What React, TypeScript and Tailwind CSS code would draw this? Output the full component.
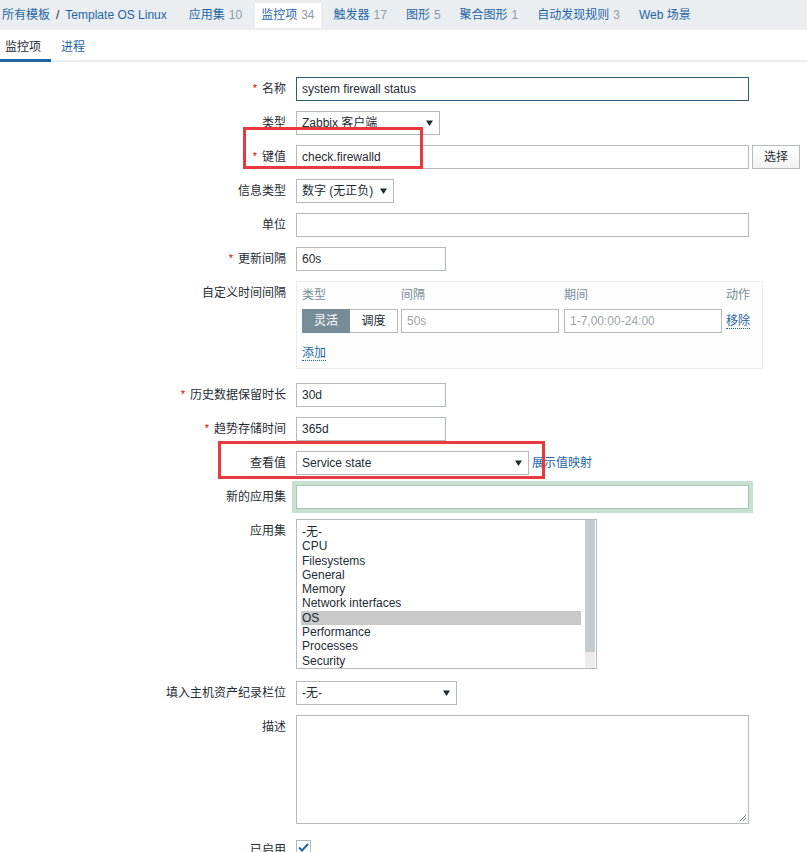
import { ReactNode } from "react";

function Caret() {
    return (
        <svg width="7" height="6" viewBox="0 0 7 6" className="shrink-0">
            <path d="M0 0.5h7L3.5 6z" fill="#1f2c33" />
        </svg>
    );
}

function Row({
    label,
    required,
    children,
    className = "",
}: {
    label: string;
    required?: boolean;
    children: ReactNode;
    className?: string;
}) {
    return (
        <div className={"flex " + className}>
            <div className="w-[286px] shrink-0 text-right h-[24px] leading-[24px] whitespace-nowrap">
                {required && (
                    <span className="text-[#dc0000] text-[11px] mr-[5px] relative top-[-1px]">
                        *
                    </span>
                )}
                {label}
            </div>
            <div className="ml-[10px] flex items-start">{children}</div>
        </div>
    );
}

function TextBox({
    value,
    width,
    focused,
    placeholder,
}: {
    value?: string;
    width: string;
    focused?: boolean;
    placeholder?: boolean;
}) {
    return (
        <div
            className={
                "h-[24px] leading-[22px] px-[5px] border bg-white whitespace-nowrap overflow-hidden " +
                width +
                (focused ? " border-[#2f5b73]" : " border-[#b5b9bb]") +
                (placeholder ? " text-[#9ba5aa]" : "")
            }
        >
            {value}
        </div>
    );
}

function SelectBox({ value, width }: { value: string; width: string }) {
    return (
        <div
            className={
                "h-[24px] flex items-center justify-between pl-[5px] pr-[6px] border border-[#b5b9bb] bg-white whitespace-nowrap " +
                width
            }
        >
            <span>{value}</span>
            <Caret />
        </div>
    );
}

const navItems = [
    { name: "应用集", count: "10" },
    { name: "监控项", count: "34", active: true },
    { name: "触发器", count: "17" },
    { name: "图形", count: "5" },
    { name: "聚合图形", count: "1" },
    { name: "自动发现规则", count: "3" },
    { name: "Web 场景", count: "" },
];

const applications = [
    "-无-",
    "CPU",
    "Filesystems",
    "General",
    "Memory",
    "Network interfaces",
    "OS",
    "Performance",
    "Processes",
    "Security",
];

export default function App() {
    return (
        <div className="relative w-[807px] h-[852px] overflow-hidden bg-white text-[12px] text-[#1f2c33] font-['Liberation_Sans','Noto_Sans_CJK_SC',sans-serif]">
            {/* breadcrumbs */}
            <div className="h-[30px] bg-[#ebeef0] flex items-center pl-[2px] text-[#1f65a6]">
                <span>所有模板</span>
                <span className="mx-[6px] text-[#1f2c33]">/</span>
                <span className="pr-[9px]">Template OS Linux</span>
                {navItems.map((item) => (
                    <span
                        key={item.name}
                        className={
                            "ml-[7px] px-[6px] h-[25px] leading-[25px] " +
                            (item.active ? "bg-white" : "")
                        }
                    >
                        {item.name}
                        {item.count && (
                            <span className="ml-[4px] text-[#8e9aa2]">
                                {item.count}
                            </span>
                        )}
                    </span>
                ))}
            </div>

            {/* tabs */}
            <div className="h-[32px] flex border-b-2 border-[#ebeef0]">
                <div className="pl-[5px] pr-[10px] pt-[8px] border-b-[3px] border-[#1f65a6] mb-[-2px]">
                    监控项
                </div>
                <div className="pl-[10px] pt-[8px] text-[#1f65a6]">进程</div>
            </div>

            <div className="pt-[15px]">
                <Row label="名称" required className="mb-[10px]">
                    <TextBox value="system firewall status" width="w-[453px]" focused />
                </Row>
                <Row label="类型" className="mb-[10px]">
                    <SelectBox value="Zabbix 客户端" width="w-[144px]" />
                </Row>
                <Row label="键值" required className="mb-[10px]">
                    <TextBox value="check.firewalld" width="w-[453px]" />
                    <div className="ml-[3px] w-[48px] h-[24px] leading-[22px] text-center border border-[#b5b9bb] bg-gradient-to-b from-white to-[#f2f2f2]">
                        选择
                    </div>
                </Row>
                <Row label="信息类型" className="mb-[10px]">
                    <SelectBox value="数字 (无正负)" width="w-[98px]" />
                </Row>
                <Row label="单位" className="mb-[10px]">
                    <TextBox width="w-[453px]" />
                </Row>
                <Row label="更新间隔" required className="mb-[10px]">
                    <TextBox value="60s" width="w-[150px]" />
                </Row>
                <Row label="自定义时间间隔" className="mb-[14px]">
                    <div className="w-[467px] h-[88px] border border-[#ebebeb] bg-[#fdfdfd] pl-[5px] pt-[6px]">
                        <div className="flex h-[15px] leading-[15px] text-[#768d99]">
                            <span className="w-[99px]">类型</span>
                            <span className="w-[163px]">间隔</span>
                            <span className="w-[162px]">期间</span>
                            <span>动作</span>
                        </div>
                        <div className="flex mt-[6px] items-center">
                            <div className="w-[99px] flex">
                                <div className="w-[48px] h-[24px] leading-[22px] text-center border border-[#768d99] bg-[#768d99] text-white">
                                    灵活
                                </div>
                                <div className="w-[48px] h-[24px] leading-[22px] text-center border border-[#b5b9bb] border-l-0 bg-white">
                                    调度
                                </div>
                            </div>
                            <div className="w-[163px]">
                                <TextBox value="50s" width="w-[158px]" placeholder />
                            </div>
                            <div className="w-[162px]">
                                <TextBox value="1-7,00:00-24:00" width="w-[158px]" placeholder />
                            </div>
                            <span className="text-[#1f65a6] border-b border-dotted border-[#1f65a6] leading-[14px]">
                                移除
                            </span>
                        </div>
                        <div className="mt-[11px]">
                            <span className="text-[#1f65a6] border-b border-dotted border-[#1f65a6] leading-[14px]">
                                添加
                            </span>
                        </div>
                    </div>
                </Row>
                <Row label="历史数据保留时长" required className="mb-[10px]">
                    <TextBox value="30d" width="w-[150px]" />
                </Row>
                <Row label="趋势存储时间" required className="mb-[10px]">
                    <TextBox value="365d" width="w-[150px]" />
                </Row>
                <Row label="查看值" className="mb-[10px]">
                    <SelectBox value="Service state" width="w-[233px]" />
                    <span className="ml-[3px] leading-[24px] text-[#1f65a6]">
                        展示值映射
                    </span>
                </Row>
                <Row label="新的应用集" className="mb-[10px]">
                    <div className="w-[453px] h-[24px] border border-[#a9c4b0] bg-white shadow-[0_0_0_4px_#c8e0cf]" />
                </Row>
                <Row label="应用集" className="mb-[12px]">
                    <div className="w-[301px] h-[150px] border border-[#b5b9bb] bg-white flex">
                        <div className="flex-1 pt-[5px] pl-[4px] pr-[1px]">
                            {applications.map((app) => (
                                <div
                                    key={app}
                                    className={
                                        "h-[14.3px] leading-[14.3px] pl-[1px] " +
                                        (app === "OS" ? "bg-[#c8c8c8]" : "")
                                    }
                                >
                                    {app}
                                </div>
                            ))}
                        </div>
                        <div className="w-[14px] pl-[3px] pr-[1px] flex flex-col">
                            <div className="h-[132px] bg-[#c4ccd2]" />
                            <div className="flex-1 bg-[#ececec]" />
                        </div>
                    </div>
                </Row>
                <Row label="填入主机资产纪录栏位" className="mb-[10px]">
                    <SelectBox value="-无-" width="w-[161px]" />
                </Row>
                <Row label="描述" className="mb-[14px]">
                    <div className="relative w-[453px] h-[109px] border border-[#b5b9bb] bg-white">
                        <svg
                            width="9"
                            height="9"
                            viewBox="0 0 9 9"
                            className="absolute right-[1px] bottom-[1px]"
                        >
                            <path d="M8 2L2 8M8 5L5 8" stroke="#8a8a8a" strokeWidth="1" />
                        </svg>
                    </div>
                </Row>
                <Row label="已启用">
                    <div className="w-[15px] h-[15px] mt-[2px] border border-[#b5b9bb] bg-white flex items-center justify-center">
                        <svg width="11" height="9" viewBox="0 0 11 9">
                            <path
                                d="M1 4.5L4 7.5L10 1"
                                fill="none"
                                stroke="#1f65a6"
                                strokeWidth="2"
                            />
                        </svg>
                    </div>
                </Row>
            </div>

            {/* annotation boxes */}
            <div className="absolute left-[243px] top-[127px] w-[180px] h-[42px] border-[3px] border-[#e8393f]" />
            <div className="absolute left-[218px] top-[441px] w-[327px] h-[38px] border-[3px] border-[#e8393f]" />
        </div>
    );
}
